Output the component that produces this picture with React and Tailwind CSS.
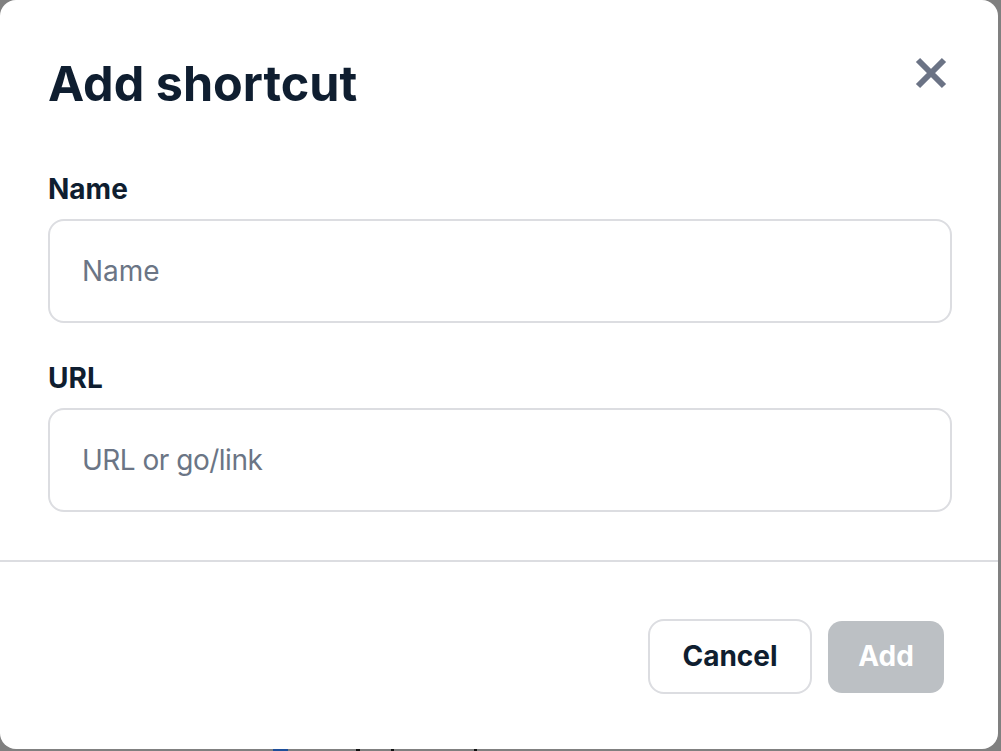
import React from "react";

export default function App() {
  return (
    <div
      className="relative w-[1001px] h-[751px] overflow-hidden bg-[#808080]"
      style={{ fontFamily: "Inter, 'Noto Sans', sans-serif" }}
    >
      {/* content peeking under the dialog */}
      <div className="absolute left-[273px] top-[749px] w-[15px] h-[2px] bg-[#1f4f9a]" />
      <div className="absolute left-[356px] top-[749px] w-[4px] h-[2px] bg-[#111]" />
      <div className="absolute left-[391px] top-[749px] w-[3px] h-[2px] bg-[#111]" />
      <div className="absolute left-[474px] top-[749px] w-[3px] h-[2px] bg-[#111]" />

      <div className="relative w-[998px] h-[749px] bg-white rounded-[16px] flex flex-col">
        <div className="flex justify-between items-start pl-[48px] pr-[51px] pt-[56px]">
          <h1 className="text-[48.5px] leading-[56px] font-bold text-[#0f1e30]">
            Add shortcut
          </h1>
          <svg width="32" height="32" viewBox="0 0 32 32" className="mt-[1px]">
            <path d="M3 3 L29 29 M29 3 L3 29" stroke="#6b7385" strokeWidth="6" fill="none" />
          </svg>
        </div>

        <div className="flex flex-col pl-[48px] pr-[46px] pt-[59px]">
          <label className="text-[28px] leading-[36px] font-bold text-[#0f1e30]">Name</label>
          <div className="mt-[12px] h-[104px] rounded-[16px] border-2 border-[#dcdde1] flex items-center pl-[32px]">
            <span className="text-[28px] text-[#6b7585]">Name</span>
          </div>

          <label className="mt-[37px] text-[28px] leading-[36px] font-bold text-[#0f1e30]">URL</label>
          <div className="mt-[12px] h-[104px] rounded-[16px] border-2 border-[#dcdde1] flex items-center pl-[32px]">
            <span className="text-[28px] text-[#6b7585] tracking-[-0.5px]">URL or go/link</span>
          </div>
        </div>

        <div className="mt-[48px] h-[2px] bg-[#dcdde1]" />

        <div className="flex justify-end items-center gap-[16px] pr-[54px] pt-[57px]">
          <button className="w-[164px] h-[75px] rounded-[16px] border-2 border-[#dcdde1] bg-white text-[28px] leading-[36px] font-bold text-[#0f1e30] pb-[2px]">
            Cancel
          </button>
          <button className="w-[116px] h-[72px] rounded-[14px] bg-[#bcc0c4] text-[28px] leading-[36px] font-bold text-white pb-[2px]">
            Add
          </button>
        </div>
      </div>
    </div>
  );
}
